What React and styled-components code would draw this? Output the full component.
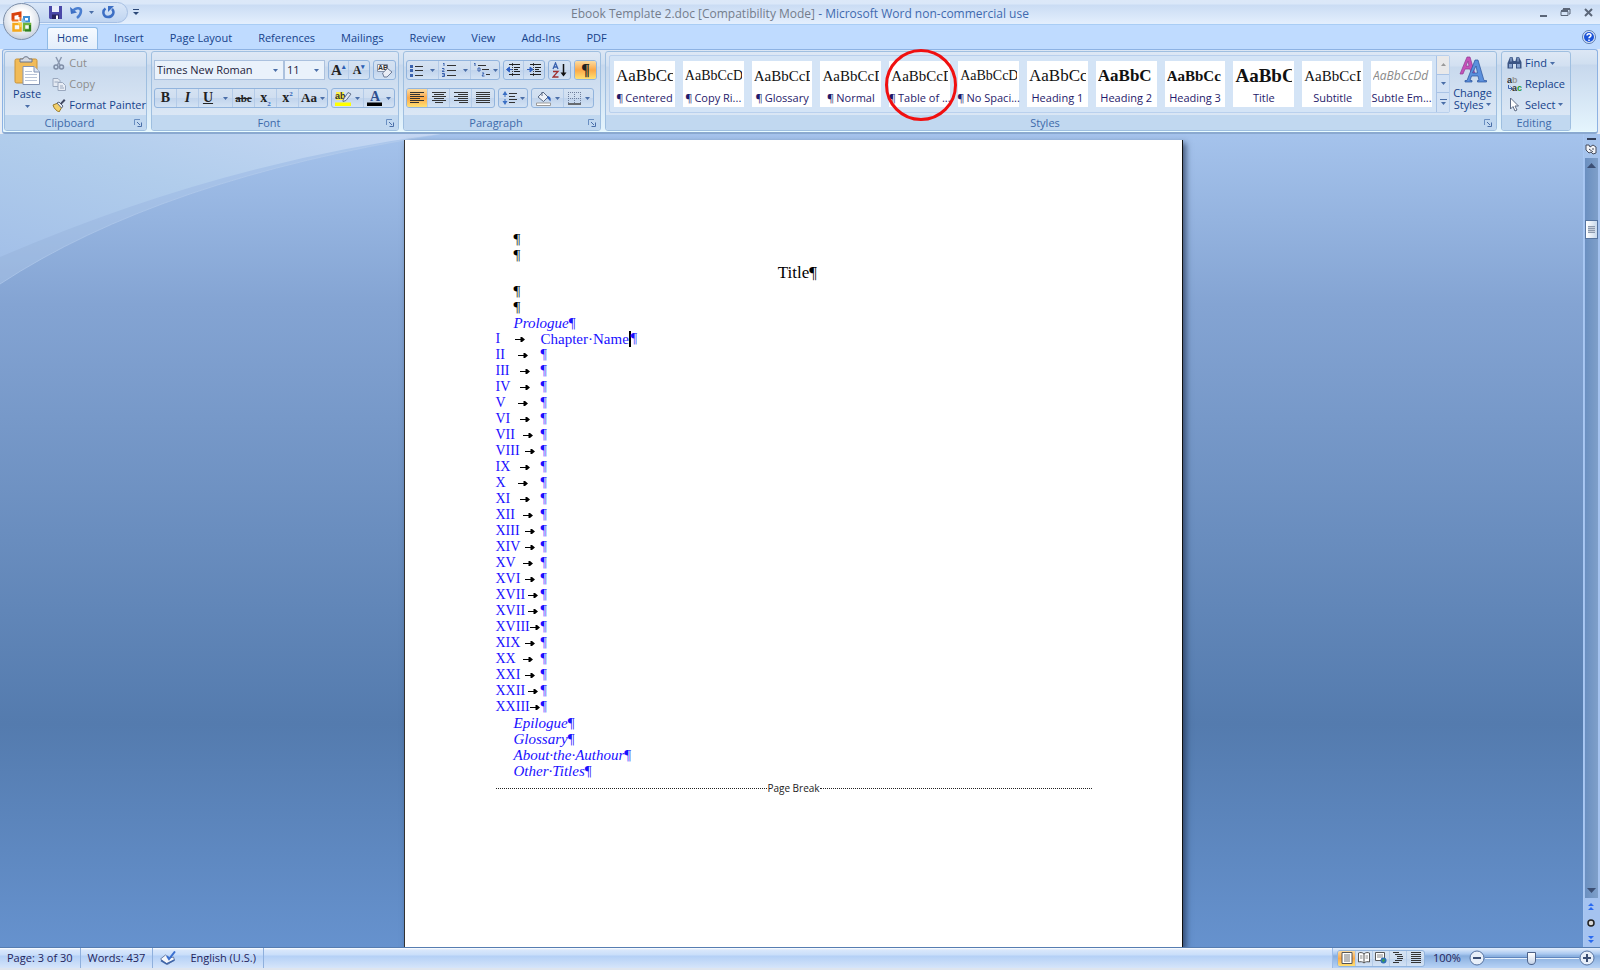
import React from 'react';
import styled, { createGlobalStyle } from 'styled-components';

const GlobalStyle = createGlobalStyle`
* { box-sizing: border-box; }
body {
  margin: 0;
  background: #e9eef5;
  color: #15428b;
  font-family: "Open Sans", "Noto Sans", sans-serif;
  font-size: 11px;
  line-height: 16px;
}
button, select, input { font: inherit; color: inherit; }
button {
  border: 0;
  padding: 0;
  background: none;
  white-space: nowrap;
}
`;

const Window = styled.div`
display: flex;
flex-direction: column;
height: 100vh;
overflow: hidden;
`;

// Title bar

const Header = styled.header`
position: relative;
`;
const TitleBar = styled.div`
display: grid;
grid-template-columns: 1fr auto 1fr;
align-items: center;
height: 25px;
background: linear-gradient(#dce8f8 0, #dbe8f9 4px, #cadcf4 5px, #e4effd 24px);
border-bottom: 1px solid #a9cdf5;
`;
const QuickArea = styled.div`
display: flex;
align-items: center;
gap: 5px;
padding-left: 24px;
`;
const QuickBar = styled.div`
display: flex;
align-items: center;
justify-content: flex-end;
gap: 4px;
width: 104px;
height: 21px;
padding-right: 12px;
border: 1px solid #a6bfe3;
border-radius: 0 11px 11px 0;
background: linear-gradient(#dae7f8, #c0d5f1);
`;
const IconButton = styled.button`
display: flex;
align-items: center;
justify-content: center;
`;
const DocTitle = styled.div`
padding-top: 3px;
font-size: 12px;
color: #3f6aaf;
span { color: #747d8c; }
`;
const WindowButtons = styled.div`
display: flex;
justify-content: flex-end;
gap: 12px;
padding-right: 7px;
`;
const OfficeButton = styled.button`
position: absolute;
left: 3px;
top: 3px;
width: 37px;
height: 37px;
border-radius: 50%;
border: 1px solid #7d8fa9;
background: radial-gradient(circle at 50% 40%, #ffffff 30%, #dde3ec 60%, #a9b5c8 100%);
display: flex;
align-items: center;
justify-content: center;
`;

// Tabs

const TabBar = styled.nav`
display: flex;
align-items: flex-end;
gap: 6px;
height: 24px;
padding: 0 4px 0 47px;
background: #bfdbff;
`;
const Tab = styled.button`
height: 22px;
padding: 0 9px 2px;
border: 1px solid ${props => props.$active ? '#8fbbe6' : 'transparent'};
border-bottom: 0;
border-radius: 3px 3px 0 0;
background: ${props => props.$active ? 'linear-gradient(#f6faff, #e3eefb)' : 'none'};
`;
const HelpButton = styled(IconButton)`
margin-left: auto;
align-self: center;
`;

// Ribbon

const Ribbon = styled.section`
display: flex;
gap: 4px;
height: 85px;
padding: 1px 26px 1px 1px;
margin: 0 2px;
border: 1px solid #8db2e3;
border-bottom: 2px solid #8aa9d0;
border-radius: 3px;
background: linear-gradient(#dce7f5 0, #d0dff0 14px, #c7d8ed 15px, #e5f5fd 100%);
box-shadow: inset 0 -1px #e8fcff;
`;
const GroupBox = styled.div`
display: flex;
flex-direction: column;
flex: ${props => props.$width ? '0 0 ' + props.$width + 'px' : '1'};
min-width: 0;
border: 1px solid #9fbfe0;
border-radius: 3px;
background: linear-gradient(#dee8f5 0, #d2e0f1 14px, #c8d9ed 15px, #dbe7f5 64px);
`;
const GroupBody = styled.div`
flex: 1;
display: flex;
padding: ${props => props.$pad || '0 2px'};
min-height: 0;
`;
const Caption = styled.div`
display: flex;
align-items: center;
height: 15px;
padding-right: 4px;
border-radius: 0 0 2px 2px;
background: #c1d8f0;
color: #3e6aaa;
text-align: center;
span { flex: 1; }
`;

const BigButton = styled.button`
display: flex;
flex-direction: column;
align-items: center;
width: 45px;
padding-top: 4px;
line-height: 12px;
white-space: normal;
svg { margin-bottom: 3px; }
`;
const SmallList = styled.div`
display: flex;
flex-direction: column;
padding-top: 1px;
`;
const SmallButton = styled.button`
display: flex;
align-items: center;
gap: 3px;
height: 21px;
padding-left: 3px;
color: ${props => props.$off ? '#8d8d8d' : 'inherit'};
`;

const ToolRows = styled.div`
display: flex;
flex-direction: column;
gap: 8px;
padding-top: 8px;
`;
const ToolRow = styled.div`
display: flex;
gap: 3px;
height: 20px;
`;
const ToolSet = styled.div`
display: flex;
border: 1px solid #92b4dd;
border-radius: 3px;
overflow: hidden;
background: linear-gradient(#d5e2f2 0, #cfdef0 50%, #c1d4ec 51%, #d3e2f4 100%);
`;
const Tool = styled.button`
display: flex;
align-items: center;
justify-content: center;
gap: 3px;
width: ${props => props.$w || 22}px;
border-right: 1px solid #b4cbe8;
background: ${props => props.$on ? 'linear-gradient(#fbdba0, #fca848 50%, #ffe173)' : 'none'};
color: #222;
&:last-child { border-right: 0; }
`;
const Glyph = styled.span`
font-family: "Liberation Serif", serif;
font-size: ${props => props.$size || 14}px;
font-weight: bold;
font-style: ${props => props.$italic ? 'italic' : 'normal'};
text-decoration: ${props => props.$line || 'none'};
sup, sub { font-size: 7px; line-height: 0; color: #2c5fb5; }
`;
const ComboRow = styled.div`
display: flex;
`;
const Combo = styled.label`
display: flex;
align-items: center;
width: ${props => props.$w}px;
height: 20px;
padding: 0 5px 0 2px;
border: 1px solid #abc1de;
background: #eaf2fb;
select {
  flex: 1;
  min-width: 0;
  appearance: none;
  border: 0;
  padding: 0;
  background: none;
  color: #1c1c3c;
}
`;

// Styles gallery

const Gallery = styled.div`
display: flex;
flex: 1;
min-width: 0;
height: 58px;
margin-top: 3px;
border: 1px solid #b9d0ed;
border-radius: 2px;
background: #d4e4f6;
`;
const Cards = styled.div`
display: flex;
flex: 1;
gap: 8px;
min-width: 0;
padding: 5px 4px;
`;
const Card = styled.button`
position: relative;
flex: 1;
min-width: 0;
padding: 0 2px;
background: #fff;
color: #1f1a6b;
`;
const Sample = styled.div`
height: 28px;
line-height: 30px;
overflow: hidden;
text-align: left;
color: ${props => props.$gray ? '#8a8a8a' : '#111'};
font-family: ${props => props.$sans ? '"Open Sans", sans-serif' : '"Liberation Serif", serif'};
font-size: ${props => props.$size}px;
font-weight: ${props => props.$bold ? 'bold' : 'normal'};
font-style: ${props => props.$gray ? 'italic' : 'normal'};
`;
const CardName = styled.div`
display: flex;
justify-content: center;
gap: 2px;
height: 18px;
line-height: 18px;
`;
const RedRing = styled.span`
position: absolute;
left: -4px;
top: -12px;
width: 72px;
height: 72px;
border: 3px solid #f01010;
border-radius: 50%;
z-index: 2;
`;
const GalleryScroll = styled.div`
display: grid;
grid-template-rows: 1fr 1fr 1fr;
width: 13px;
button { border-left: 1px solid #a9c3e6; border-bottom: 1px solid #a9c3e6; background: #d3e2f5; }
button:first-child { background: #e9e9ea; }
button:last-child { border-bottom: 0; }
`;

// Workspace

const Workspace = styled.main`
position: relative;
display: flex;
flex: 1;
min-height: 0;
background: linear-gradient(#a5c3ec 0, #84a4d3 170px, #547bae 590px, #6692ce 100%);
`;
const Swoosh = styled.svg`
position: absolute;
left: 0;
top: 0;
`;
const Desk = styled.div`
position: relative;
display: flex;
justify-content: center;
flex: 1;
padding: 6px 0 0 3px;
overflow: hidden;
`;
const Paper = styled.article`
width: 779px;
padding: 91px 90px 0 91px;
border-left: 1px solid #333;
border-right: 1px solid #111;
background: #fff;
box-shadow: 3px 3px 6px rgba(30, 45, 75, 0.7);
color: #000;
font-family: "Liberation Serif", serif;
font-size: 15px;
`;
const Line = styled.div`
height: 16px;
padding-left: 18px;
font-style: ${props => props.$toc ? 'italic' : 'normal'};
color: ${props => props.$toc ? '#1a10ff' : '#000'};
`;
const Heading = styled.h1`
margin: 0;
height: 20px;
line-height: 20px;
font-size: 17px;
font-weight: normal;
text-align: center;
`;
const HangingMark = styled.span`
display: inline-block;
width: 0;
`;
const Mark = styled.span`
font-style: normal;
`;
const Chapter = styled.div`
display: flex;
height: 16px;
color: #1a10ff;
font-size: 14px;
`;
const Numeral = styled.div`
display: flex;
align-items: center;
justify-content: space-between;
width: 45px;
svg { margin: 0 auto; flex: none; }
`;
const ChapterName = styled.span`
font-size: 15px;
`;
const Caret = styled.span`
width: 2px;
height: 16px;
background: #000;
`;
const PageBreak = styled.div`
display: flex;
align-items: center;
height: 18px;
color: #222;
font-family: "Open Sans", sans-serif;
font-size: 10px;
&::before, &::after {
  content: "";
  flex: 1;
  border-top: 1px dotted #222;
}
`;

// Vertical scroll bar

const ScrollColumn = styled.aside`
position: relative;
display: flex;
flex-direction: column;
width: 17px;
padding-right: 2px;
border-left: 1px solid #a9c8f2;
background: #a5c3f0;
`;
const ScrollTop = styled.div`
display: flex;
flex-direction: column;
align-items: center;
gap: 3px;
height: 24px;
padding-top: 4px;
background: #a5c3ec;
`;
const Track = styled.div`
display: flex;
flex-direction: column;
align-items: center;
flex: 1;
margin-left: 1px;
padding: 5px 0;
background: linear-gradient(90deg, #6a8fc0, #7f9fc9);
`;
const Thumb = styled.div`
width: 13px;
height: 19px;
margin-top: 52px;
padding: 5px 2px;
border: 1px solid #56749f;
background: linear-gradient(90deg, #fff, #c9d9ec);
div { height: 7px; background: repeating-linear-gradient(#8d9aae 0 1px, #c7cfdb 1px 2px); }
`;
const TrackEnd = styled.div`
display: flex;
margin-top: auto;
`;
const BrowseButtons = styled.div`
display: flex;
flex-direction: column;
align-items: center;
justify-content: space-around;
height: 49px;
`;

// Status bar

const StatusBar = styled.footer`
display: flex;
height: 23px;
border-top: 1px solid #567db1;
border-bottom: 2px solid #dfe5ee;
background: linear-gradient(#fff 0, #d9e7fb 2px, #c9defa 7px, #b4d0f6 8px, #d6e5fa 100%);
color: #24245c;
`;
const StatusItem = styled.div`
display: flex;
align-items: center;
padding: 0 7px 1px;
border-right: 1px solid #8fb0dd;
`;
const StatusFill = styled.div`
flex: 1;
border-right: 1px solid #9dbbe6;
`;
const StatusRight = styled.div`
display: flex;
align-items: center;
width: 267px;
padding: 0 5px 0 4px;
background: linear-gradient(#e4eefc 0, #a9c8f0 6px, #88aede 8px, #b8d3f6 100%);
`;
const ViewSet = styled(ToolSet)`
height: 17px;
margin-right: 8px;
button { width: 17px; }
button:first-child { width: 18px; }
`;
const ZoomSlider = styled.input`
flex: 1;
min-width: 0;
height: 15px;
margin: 0;
appearance: none;
background: linear-gradient(transparent 6px, #5f86be 6px 7px, #e6f0fc 7px 8px, transparent 8px);
&::-webkit-slider-thumb {
  appearance: none;
  width: 9px;
  height: 13px;
  border: 1px solid #4d6187;
  border-radius: 1px 1px 5px 5px;
  background: linear-gradient(#fff, #c5d3e8);
}
`;
const RoundButton = styled.button`
width: 16px;
height: 16px;
flex: none;
svg { display: block; }
`;

// Icons

const Icon = ({ w = 16, h = 16, box, children }) => (
  <svg width={w} height={h} viewBox={box || `0 0 ${w} ${h}`} fill="none" aria-hidden="true">
    {children}
  </svg>
);
const Down = ({ color = '#4a6ea8' }) => (
  <Icon w={5} h={3}><path d="M0 0h5L2.500 3z" fill={color} /></Icon>
);
const Up = ({ color = '#9a9a9a' }) => (
  <Icon w={5} h={3}><path d="M0 3h5L2.500 0z" fill={color} /></Icon>
);
const Launcher = () => (
  <Icon w={8} h={8}>
    <path d="M.5 6V.5H6" stroke="#6a8fc2" />
    <path d="M3 3l3 3M7.500 3.500v4h-4" stroke="#4a6ea8" />
  </Icon>
);
const OfficeLogo = () => (
  <Icon w={23} h={23}>
    <path d="M3 10.500V4.500l7-1.500v4" stroke="#d8420d" strokeWidth="3" />
    <path d="M2 10.500h6.500M10.500 7v4" stroke="#f0701f" strokeWidth="2" />
    <rect x="14" y="7" width="5" height="4.500" stroke="#3c8fd4" strokeWidth="2" />
    <path d="M12.500 8.500v3h3" stroke="#8cc4ee" strokeWidth="2" />
    <path d="M3.500 14h7v6.500h-7z" stroke="#f5a81c" strokeWidth="2.500" />
    <path d="M8 13.500h3v3.500" stroke="#fbd04c" strokeWidth="2" />
    <path d="M14 14h6v6h-6z" stroke="#6db33a" strokeWidth="2.500" />
    <path d="M20 15v5.500h-5" stroke="#2f7f22" strokeWidth="2" />
  </Icon>
);
const Save = () => (
  <Icon w={13} h={13}>
    <path d="M0 0h13v13H1L0 12z" fill="#4a48a8" />
    <path d="M3 0h7v6H3z" fill="#e9eefb" />
    <path d="M3 8.500h7V13H3z" fill="#26245e" />
    <path d="M7 9.500h2V13H7z" fill="#fff" />
  </Icon>
);
const Undo = () => (
  <Icon w={13} h={13}>
    <path d="M0 1l1 7 6-1.500z" fill="#3d6fc4" />
    <path d="M3 5C6 1 11 1.500 11 5c0 3-1.500 5-4 7" stroke="#4b7fd0" strokeWidth="2.500" />
  </Icon>
);
const Redo = () => (
  <Icon w={13} h={13}>
    <path d="M3.500 2.500C0 5 1 11 6 11s7-5 4-8" stroke="#3d6fc4" strokeWidth="2.500" />
    <path d="M6 6V0h6z" fill="#3d6fc4" />
  </Icon>
);
const PasteIcon = () => (
  <Icon w={27} h={29}>
    <rect x="1" y="3" width="22" height="24" rx="1.500" fill="#f1bb58" stroke="#c99339" />
    <path d="M6 6V3h3c0-3 6-3 6 0h3v3z" fill="#d4d9e2" stroke="#6a7488" />
    <path d="M9 10.500h11l5.500 5.500v12.500H9z" fill="#fff" stroke="#8394b4" />
    <path d="M20 10.500V16h5.500" fill="#dde5f2" stroke="#8394b4" />
    <path d="M11 15.500h7M11 18.500h12M11 21.500h12M11 24.500h12" stroke="#b9c4d8" />
  </Icon>
);
const CutIcon = () => (
  <Icon w={14} h={14}>
    <path d="M4 1l4 8M9.500 1L5.500 9" stroke="#8b99b0" strokeWidth="1.500" />
    <circle cx="4" cy="11" r="2" stroke="#7f8da6" strokeWidth="1.500" />
    <circle cx="9.500" cy="11" r="2" stroke="#7f8da6" strokeWidth="1.500" />
  </Icon>
);
const CopyIcon = () => (
  <Icon w={14} h={14}>
    <path d="M1 1.500h5l2 2v6H1z" fill="#e3e9f2" stroke="#9aa8be" />
    <path d="M6 5.500h4.500l3 3v5H6z" fill="#e8edf5" stroke="#9aa8be" />
    <path d="M2.500 5h4M8 9h3M8 11h4" stroke="#9aa8be" />
  </Icon>
);
const PainterIcon = () => (
  <Icon w={14} h={14}>
    <path d="M1 7l5-2 4 4-3 5c-2-1-5-3-6-7z" fill="#f3d06a" stroke="#9a7a2b" />
    <path d="M5 5l2-1 4 4-1.500 2z" fill="#e8ecf4" stroke="#5c6880" />
    <path d="M8 5.500L12 1l1.500 1.500-4 4z" fill="#3e4660" />
  </Icon>
);
const EraseIcon = () => (
  <Icon w={18} h={16}>
    <path d="M1.500 2.500h10v7h-10z" fill="#f2f5fa" stroke="#8794ab" />
    <text x="2" y="8" fontFamily="Liberation Sans" fontSize="7" fontWeight="bold" fill="#333">AB</text>
    <path d="M6.500 11l5-4.500 4.500 3.500-5 5h-3z" fill="#e9edf5" stroke="#6e7d98" />
  </Icon>
);
const lineColor = '#333';
const Lines = ({ rows, w = 14 }) => (
  <Icon w={w} h={12}>
    {rows.map(([x1, x2], i) => (
      <path key={i} d={`M${x1} ${i * 2 + 0.5}H${x2}`} stroke={lineColor} />
    ))}
  </Icon>
);
const alignRows = {
  left: [[0, 14], [0, 10], [0, 14], [0, 10], [0, 14], [0, 9]],
  center: [[0, 14], [2, 12], [0, 14], [2, 12], [0, 14], [3, 11]],
  right: [[0, 14], [4, 14], [0, 14], [4, 14], [0, 14], [5, 14]],
  justify: [[0, 14], [0, 14], [0, 14], [0, 14], [0, 14], [0, 14]],
};
const Bullets = () => (
  <Icon w={13} h={13}>
    <path d="M0 1h3v3H0zM0 5h3v3H0zM0 10h3v3H0z" fill="#3a62ae" />
    <path d="M5 2.500h8M5 6.500h8M5 11.500h8" stroke={lineColor} />
  </Icon>
);
const Numbers = () => (
  <Icon w={14} h={14}>
    <path d="M1 1l1-1v3M0 5.500h2v1L0 8.500h2.500M0 10.500h2.500v3H0M.5 12h2" stroke="#3a62ae" />
    <path d="M5 2.500h9M5 7.500h9M5 12.500h9" stroke={lineColor} />
  </Icon>
);
const Levels = () => (
  <Icon w={17} h={14}>
    <path d="M1 1l1-1v3M5 5h2v3H5zM9 10h2l-2 3h2.500" stroke="#3a62ae" />
    <path d="M5 2.500h8M9 6.500h7M13 11.500h4" stroke={lineColor} />
  </Icon>
);
const Indent = ({ flip }) => (
  <Icon w={15} h={14}>
    <path d="M3 1.500h11M8 4.500h6M8 6.500h4M8 8.500h6M3 11.500h11" stroke="#222" />
    <path d={flip ? 'M0 6.500h4M3 4l3 2.500L3 9z' : 'M6 6.500H3M3.500 4L.5 6.500l3 2.500z'} stroke="#2f5fc0" fill="#2f5fc0" />
    <path d="M6.500 0v14" stroke="#444" strokeDasharray="1 1" />
  </Icon>
);
const SortIcon = () => (
  <Icon w={16} h={16}>
    <path d="M1 7l2.500-6L6 7M2 5h3" stroke="#3a62ae" strokeWidth="1.300" />
    <path d="M1 9.500h5L1 15h5.500" stroke="#a03030" strokeWidth="1.300" />
    <path d="M11.500 2v11" stroke="#111" strokeWidth="1.500" />
    <path d="M8.500 10.500h6l-3 4z" fill="#111" />
  </Icon>
);
const SpacingIcon = () => (
  <Icon w={15} h={14}>
    <path d="M3 2v10" stroke="#3a6fc4" strokeDasharray="4 2" />
    <path d="M.5 4L3 0l2.500 4zM.5 10L3 14l2.500-4z" fill="#3a6fc4" />
    <path d="M7 2.500h8M7 5.500h6M7 8.500h8M7 11.500h6" stroke={lineColor} />
  </Icon>
);
const BucketIcon = () => (
  <Icon w={16} h={15}>
    <path d="M2 6l5-5 5 5-4.500 4.500z" fill="#edf1f7" stroke="#5a6a85" />
    <path d="M6 5V1" stroke="#5a6a85" />
    <path d="M12 5c3 1 3 3 2.500 5.500C13 9 12.500 8 11 7z" fill="#2f5fb5" />
    <path d="M.5 12h14v2.500H.5z" fill="#fff" stroke="#9a9a9a" />
  </Icon>
);
const BorderIcon = () => (
  <Icon w={14} h={13}>
    <path d="M.5 0v12M6.500 0v12M12.500 0v12M0 .5h13M0 6.500h13" stroke="#6f7f9c" strokeDasharray="1 1" />
    <path d="M0 12h13" stroke="#444" strokeWidth="1.500" />
  </Icon>
);
const HighlightIcon = () => (
  <Icon w={17} h={15}>
    <path d="M1 1h8v8H1z" fill="#fdf04a" />
    <text x="0" y="8" fontFamily="Liberation Sans" fontSize="9" fontWeight="bold" fill="#333">ab</text>
    <path d="M8 9l5-7.500 3 1.500-5 6.500-3 1z" fill="#dfe6f2" stroke="#66758f" />
    <path d="M0 11.500h16V15H0z" fill="#ff0" />
  </Icon>
);
const FontColorIcon = () => (
  <Icon w={16} h={15}>
    <text x="3" y="10" fontFamily="Liberation Serif" fontSize="14" fontWeight="bold" fill="#2f4f8f">A</text>
    <path d="M0 11.500h15V15H0z" fill="#000" />
  </Icon>
);
const ChangeIcon = () => (
  <Icon w={28} h={28}>
    <path d="M1 18L8 1h3l5 17h-3.500l-1.500-5H6l-2 5zM7 10h3L9 5z" fill="#c552b8" stroke="#8f3a94" strokeWidth=".7" />
    <path d="M6 26v-1.500h2L16 4h3l6 20.500h2.500V26h-9v-1.500H20l-1-4.500h-6.500L11 24.500h2V26zM13.500 17h5L17 10z" fill="#5b90dd" stroke="#2a5199" strokeWidth=".7" />
  </Icon>
);
const FindIcon = () => (
  <Icon w={15} h={14}>
    <path d="M1 6l2-5h2.500l1 4h2l1-4H12l2.500 5v6.500H9V8H6v4.500H.5V7z" fill="#3b5584" />
    <path d="M2 8h3v3.500H2zM10 8h3v3.500h-3z" fill="#8aa5d0" />
    <path d="M4 1.500v4M11 1.500v4" stroke="#a9c0e5" />
  </Icon>
);
const ReplaceIcon = () => (
  <Icon w={15} h={15}>
    <text x="0" y="6" fontFamily="Liberation Sans" fontSize="9" fontWeight="bold" fill="#333">a<tspan fill="#999">b</tspan></text>
    <path d="M1.500 8v3.500H5M3.500 9.500l2 2-2 2" stroke="#3a62ae" />
    <text x="5" y="14" fontFamily="Liberation Sans" fontSize="9" fontWeight="bold" fill="#333">a<tspan fill="#1f9a2c">c</tspan></text>
  </Icon>
);
const SelectIcon = () => (
  <Icon w={15} h={15}>
    <path d="M3.500 1v11l2.500-2.500 2 4.500 2-1-2-4h3.500z" fill="#fff" stroke="#5d6b85" />
  </Icon>
);
const HelpIcon = () => (
  <Icon w={14} h={14}>
    <circle cx="7" cy="7" r="6.500" fill="#dce8f8" stroke="#5b7bb0" />
    <circle cx="7" cy="7" r="5" fill="#1b53d8" />
    <path d="M5 5.500C5 3 9 3 9 5.500 9 7 7 6.500 7 8.300M7 9.500v1.500" stroke="#fff" strokeWidth="1.500" />
  </Icon>
);
const Arrow = () => (
  <Icon w={10} h={7}>
    <path d="M0 3.500h7" stroke="#000" />
    <path d="M5.500 1h1.500l3 2.500L7 6H5.500z" fill="#000" />
  </Icon>
);
const SpellIcon = () => (
  <Icon w={16} h={14}>
    <path d="M.5 8l5-4 4 3 4-1 1 3-7 4.500z" fill="#f4f6fa" stroke="#6b80a8" />
    <path d="M1 9.500l5.500 3.500 8-4" stroke="#3f65a8" strokeWidth="1.500" />
    <path d="M7 5l2 3 6-7.500" stroke="#3a6fd0" strokeWidth="2" />
  </Icon>
);
const PageView = () => (
  <Icon w={12} h={12}>
    <path d="M1 .5h10v11H1z" fill="#fff" stroke="#555" />
    <path d="M3 3h6M3 5h6M3 7h6M3 9h6" stroke="#777" />
  </Icon>
);
const BookView = () => (
  <Icon w={12} h={12}>
    <path d="M6 2C4 0 2 .5.5 1v9c2-.5 4-.5 5.500 1 1.500-1.500 3.500-1.500 5.500-1V1C10 .5 8 0 6 2v9" fill="#fff" stroke="#555" />
    <path d="M2 4h2.500M2 6h2.500M7.500 4H10M7.500 6H10" stroke="#888" />
  </Icon>
);
const WebView = () => (
  <Icon w={12} h={12}>
    <path d="M.5.5h9v8h-9z" fill="#fff" stroke="#555" />
    <path d="M2 3h6M2 5h6" stroke="#888" />
    <circle cx="8.500" cy="8.500" r="3" fill="#2e6fb8" />
    <path d="M7 8l2-1.500 1 2-2 2z" fill="#3fa04a" />
  </Icon>
);
const ZoomIcon = ({ plus }) => (
  <Icon w={16} h={16}>
    <circle cx="8" cy="8" r="7" fill="#e8eff9" stroke="#5672a0" />
    <path d={plus ? 'M4 8h8M8 4v8' : 'M4 8h8'} stroke="#3c4f74" strokeWidth="2" />
  </Icon>
);
const DoubleArrow = ({ down }) => (
  <Icon w={6} h={7}>
    <path d={down ? 'M0 0h6L3 3zM0 4h6L3 7z' : 'M0 3h6L3 0zM0 7h6L3 4z'} fill="#2a6af0" />
  </Icon>
);

// Data

const tabs = ['Home', 'Insert', 'Page Layout', 'References', 'Mailings', 'Review', 'View', 'Add-Ins', 'PDF'];

const cards = [
  { name: 'Centered', para: true, text: 'AaBbCc', size: 17 },
  { name: 'Copy Ri...', para: true, text: 'AaBbCcD', size: 14 },
  { name: 'Glossary', para: true, text: 'AaBbCcD', size: 15 },
  { name: 'Normal', para: true, text: 'AaBbCcD', size: 15 },
  { name: 'Table of ...', para: true, text: 'AaBbCcD', size: 15, ring: true },
  { name: 'No Spaci...', para: true, text: 'AaBbCcD', size: 14 },
  { name: 'Heading 1', text: 'AaBbCc', size: 17 },
  { name: 'Heading 2', text: 'AaBbC', size: 17, bold: true },
  { name: 'Heading 3', text: 'AaBbCc', size: 15, bold: true },
  { name: 'Title', text: 'AaBbC', size: 19, bold: true },
  { name: 'Subtitle', text: 'AaBbCcD', size: 15 },
  { name: 'Subtle Em...', text: 'AaBbCcDd', size: 12, gray: true, sans: true },
];

const chapters = [
  'I', 'II', 'III', 'IV', 'V', 'VI', 'VII', 'VIII', 'IX', 'X', 'XI', 'XII', 'XIII', 'XIV', 'XV',
  'XVI', 'XVII', 'XVII', 'XVIII', 'XIX', 'XX', 'XXI', 'XXII', 'XXIII',
];

const endings = ['Epilogue', 'Glossary', 'About·the·Authour', 'Other·Titles'];

function Group(props) {
  return (
    <GroupBox $width={props.width}>
      <GroupBody $pad={props.pad}>{props.children}</GroupBody>
      <Caption>
        <span>{props.title}</span>
        {props.launcher && <IconButton aria-label={props.title + ' options'}><Launcher /></IconButton>}
      </Caption>
    </GroupBox>
  );
}

function TopBar() {
  return (
    <Header>
      <TitleBar>
        <QuickArea>
          <QuickBar>
            <IconButton aria-label="Save"><Save /></IconButton>
            <IconButton aria-label="Undo"><Icon w={4} h={1} /><Undo /></IconButton>
            <IconButton aria-label="Undo list"><Icon w={2} h={1} /><Down /></IconButton>
            <IconButton aria-label="Redo"><Icon w={4} h={1} /><Redo /></IconButton>
          </QuickBar>
          <IconButton aria-label="Customize">
            <Icon w={6} h={7}><path d="M0 .5h6" stroke="#2b4878" /><path d="M0 3h6L3 6z" fill="#2b4878" /></Icon>
          </IconButton>
        </QuickArea>
        <DocTitle><span>Ebook Template 2.doc [Compatibility Mode]</span> - Microsoft Word non-commercial use</DocTitle>
        <WindowButtons>
          <IconButton aria-label="Minimize"><Icon w={9} h={9}><path d="M1 8h7" stroke="#5b6678" strokeWidth="2" /></Icon></IconButton>
          <IconButton aria-label="Restore">
            <Icon w={12} h={9}><path d="M3 3V1h7v5H9M1 3.500h7v4H1z" stroke="#5b6678" /><path d="M1 3h7M3 1h7" stroke="#5b6678" strokeWidth="2" /></Icon>
          </IconButton>
          <IconButton aria-label="Close"><Icon w={9} h={9}><path d="M1 1l7 7M8 1L1 8" stroke="#5b6678" strokeWidth="2" /></Icon></IconButton>
        </WindowButtons>
      </TitleBar>
      <TabBar>
        {tabs.map((name, i) => <Tab key={name} $active={i === 0}>{name}</Tab>)}
        <HelpButton aria-label="Help"><HelpIcon /></HelpButton>
      </TabBar>
      <OfficeButton aria-label="Office"><OfficeLogo /></OfficeButton>
    </Header>
  );
}

function FontGroup() {
  return (
    <Group title="Font" width={248} launcher>
      <ToolRows>
        <ToolRow>
          <ComboRow>
            <Combo $w={130}>
              <select aria-label="Font"><option>Times New Roman</option></select>
              <Down />
            </Combo>
            <Combo $w={41}>
              <select aria-label="Font size"><option>11</option></select>
              <Down />
            </Combo>
          </ComboRow>
          <ToolSet>
            <Tool $w={20} aria-label="Grow font"><Glyph $size={15}>A<sup>▴</sup></Glyph></Tool>
            <Tool $w={20} aria-label="Shrink font"><Glyph $size={12}>A<sup>▾</sup></Glyph></Tool>
          </ToolSet>
          <ToolSet>
            <Tool $w={21} aria-label="Clear formatting"><EraseIcon /></Tool>
          </ToolSet>
        </ToolRow>
        <ToolRow>
          <ToolSet>
            <Tool><Glyph>B</Glyph></Tool>
            <Tool><Glyph $italic>I</Glyph></Tool>
            <Tool $w={34}><Glyph $line="underline">U</Glyph><Icon w={4} h={1} /><Down /></Tool>
            <Tool><Glyph $size={11} $line="line-through">abc</Glyph></Tool>
            <Tool><Glyph>x<sub>2</sub></Glyph></Tool>
            <Tool><Glyph>x<sup>2</sup></Glyph></Tool>
            <Tool $w={28}><Glyph $size={13}>Aa</Glyph><Down /></Tool>
          </ToolSet>
          <ToolSet>
            <Tool $w={32} aria-label="Highlight"><HighlightIcon /><Down /></Tool>
            <Tool $w={30} aria-label="Font color"><FontColorIcon /><Down /></Tool>
          </ToolSet>
        </ToolRow>
      </ToolRows>
    </Group>
  );
}

function ParagraphGroup() {
  return (
    <Group title="Paragraph" width={198} launcher>
      <ToolRows>
        <ToolRow>
          <ToolSet>
            <Tool $w={32} aria-label="Bullets"><Bullets /><Icon w={1} h={1} /><Down /></Tool>
            <Tool $w={32} aria-label="Numbering"><Numbers /><Icon w={1} h={1} /><Down /></Tool>
            <Tool $w={28} aria-label="Multilevel list"><Levels /><Down /></Tool>
          </ToolSet>
          <ToolSet>
            <Tool $w={20} aria-label="Decrease indent"><Indent /></Tool>
            <Tool $w={20} aria-label="Increase indent"><Indent flip /></Tool>
          </ToolSet>
          <ToolSet><Tool $w={21} aria-label="Sort"><SortIcon /></Tool></ToolSet>
          <ToolSet><Tool $w={21} $on aria-label="Show marks"><Glyph $size={16}>¶</Glyph></Tool></ToolSet>
        </ToolRow>
        <ToolRow>
          <ToolSet>
            <Tool $w={21} $on aria-label="Align left"><Lines rows={alignRows.left} /></Tool>
            <Tool aria-label="Center"><Lines rows={alignRows.center} /></Tool>
            <Tool aria-label="Align right"><Lines rows={alignRows.right} /></Tool>
            <Tool aria-label="Justify"><Lines rows={alignRows.justify} /></Tool>
          </ToolSet>
          <ToolSet><Tool $w={28} aria-label="Line spacing"><SpacingIcon /><Down /></Tool></ToolSet>
          <ToolSet>
            <Tool $w={32} aria-label="Shading"><BucketIcon /><Down /></Tool>
            <Tool $w={29} aria-label="Borders"><BorderIcon /><Down /></Tool>
          </ToolSet>
        </ToolRow>
      </ToolRows>
    </Group>
  );
}

function StylesGroup() {
  return (
    <Group title="Styles" pad="0 1px 0 3px" launcher>
      <Gallery>
        <Cards>
          {cards.map(card => (
            <Card key={card.name}>
              <Sample $size={card.size} $bold={card.bold} $gray={card.gray} $sans={card.sans}>{card.text}</Sample>
              <CardName>{card.para && <span>¶</span>}<span>{card.name}</span></CardName>
              {card.ring && <RedRing />}
            </Card>
          ))}
        </Cards>
        <GalleryScroll>
          <IconButton aria-label="Row up"><Up /></IconButton>
          <IconButton aria-label="Row down"><Down /></IconButton>
          <IconButton aria-label="More styles">
            <Icon w={7} h={7}><path d="M0 .5h7" stroke="#4a6ea8" /><path d="M1 3h5L3.500 6z" fill="#4a6ea8" /></Icon>
          </IconButton>
        </GalleryScroll>
      </Gallery>
      <BigButton><ChangeIcon /><span>Change Styles <Down /></span></BigButton>
    </Group>
  );
}

function RibbonBar() {
  return (
    <Ribbon>
      <Group title="Clipboard" width={143} pad="0" launcher>
        <BigButton><PasteIcon />Paste<Icon w={1} h={2} /><Down /></BigButton>
        <SmallList>
          <SmallButton $off><CutIcon />Cut</SmallButton>
          <SmallButton $off><CopyIcon />Copy</SmallButton>
          <SmallButton><PainterIcon />Format Painter</SmallButton>
        </SmallList>
      </Group>
      <FontGroup />
      <ParagraphGroup />
      <StylesGroup />
      <Group title="Editing" width={70}>
        <SmallList>
          <SmallButton><FindIcon />Find <Down /></SmallButton>
          <SmallButton><ReplaceIcon />Replace</SmallButton>
          <SmallButton><SelectIcon />Select <Down /></SmallButton>
        </SmallList>
      </Group>
    </Ribbon>
  );
}

function Page() {
  return (
    <Paper>
      <Line>¶</Line>
      <Line>¶</Line>
      <Heading>Title<HangingMark>¶</HangingMark></Heading>
      <Line>¶</Line>
      <Line>¶</Line>
      <Line $toc>Prologue<Mark>¶</Mark></Line>
      {chapters.map((num, i) => (
        <Chapter key={i}>
          <Numeral>{num}<Arrow /></Numeral>
          {i === 0 && <React.Fragment><ChapterName>Chapter·Name</ChapterName><Caret /></React.Fragment>}
          ¶
        </Chapter>
      ))}
      {endings.map(text => <Line key={text} $toc>{text}<Mark>¶</Mark></Line>)}
      <PageBreak>Page Break</PageBreak>
    </Paper>
  );
}

function VerticalScroll() {
  return (
    <ScrollColumn>
      <ScrollTop>
        <Icon w={9} h={2}><path d="M0 1h9" stroke="#333f58" strokeWidth="2" /></Icon>
        <IconButton aria-label="View ruler">
          <Icon w={12} h={12}>
            <path d="M1 2h3l1 2 3-2 3 2v6l-3 1-2-2-2 1-3-3z" fill="#f2f4f8" stroke="#444b5c" />
            <path d="M4 6l4 3M8 5v2" stroke="#444b5c" />
          </Icon>
        </IconButton>
      </ScrollTop>
      <Track>
        <Icon w={9} h={5}><path d="M0 5h9L4.500 0z" fill="#3c4f74" /></Icon>
        <Thumb><div /></Thumb>
        <TrackEnd><Icon w={9} h={5}><path d="M0 0h9L4.500 5z" fill="#3c4f74" /></Icon></TrackEnd>
      </Track>
      <BrowseButtons>
        <IconButton aria-label="Previous page"><DoubleArrow /></IconButton>
        <IconButton aria-label="Browse object">
          <Icon w={8} h={8}><circle cx="4" cy="4" r="3" fill="#d8d8d8" stroke="#222" strokeWidth="1.500" /></Icon>
        </IconButton>
        <IconButton aria-label="Next page"><DoubleArrow down /></IconButton>
      </BrowseButtons>
    </ScrollColumn>
  );
}

function Status() {
  return (
    <StatusBar>
      <StatusItem>Page: 3 of 30</StatusItem>
      <StatusItem>Words: 437</StatusItem>
      <StatusItem><SpellIcon /><Icon w={14} h={1} />English (U.S.)</StatusItem>
      <StatusFill />
      <StatusRight>
        <ViewSet>
          <Tool $on aria-label="Print layout"><PageView /></Tool>
          <Tool aria-label="Reading"><BookView /></Tool>
          <Tool aria-label="Web layout"><WebView /></Tool>
          <Tool aria-label="Outline"><Lines w={10} rows={[[0, 6], [2, 9], [4, 10], [4, 10], [2, 9], [0, 6]]} /></Tool>
          <Tool aria-label="Draft"><Lines w={10} rows={[[0, 10], [0, 10], [0, 10], [0, 10], [0, 10], [0, 10]]} /></Tool>
        </ViewSet>
        100%
        <Icon w={8} h={1} />
        <RoundButton aria-label="Zoom out"><ZoomIcon /></RoundButton>
        <ZoomSlider type="range" aria-label="Zoom" defaultValue="50" />
        <RoundButton aria-label="Zoom in"><ZoomIcon plus /></RoundButton>
      </StatusRight>
    </StatusBar>
  );
}

class App extends React.Component {
  render() {
    return (
      <Window>
        <GlobalStyle />
        <TopBar />
        <RibbonBar />
        <Workspace>
          <Swoosh width="460" height="160" viewBox="0 0 460 160" aria-hidden="true">
            <defs>
              <linearGradient id="sheen" x1="0" y1="1" x2="1" y2="0">
                <stop offset="0" stopColor="#a3c0e8" />
                <stop offset=".5" stopColor="#b1cdec" />
                <stop offset="1" stopColor="#c6d8f4" />
              </linearGradient>
            </defs>
            <path d="M0 150Q160 45 440 0H0z" fill="#b9d0ee" fillOpacity=".35" />
            <path d="M0 150Q160 45 440 0" stroke="#b5cdec" strokeOpacity=".6" fill="none" />
            <path d="M0 123Q220 28 440 0H0z" fill="url(#sheen)" />
          </Swoosh>
          <Desk><Page /></Desk>
          <VerticalScroll />
        </Workspace>
        <Status />
      </Window>
    );
  }
}

export default App;
